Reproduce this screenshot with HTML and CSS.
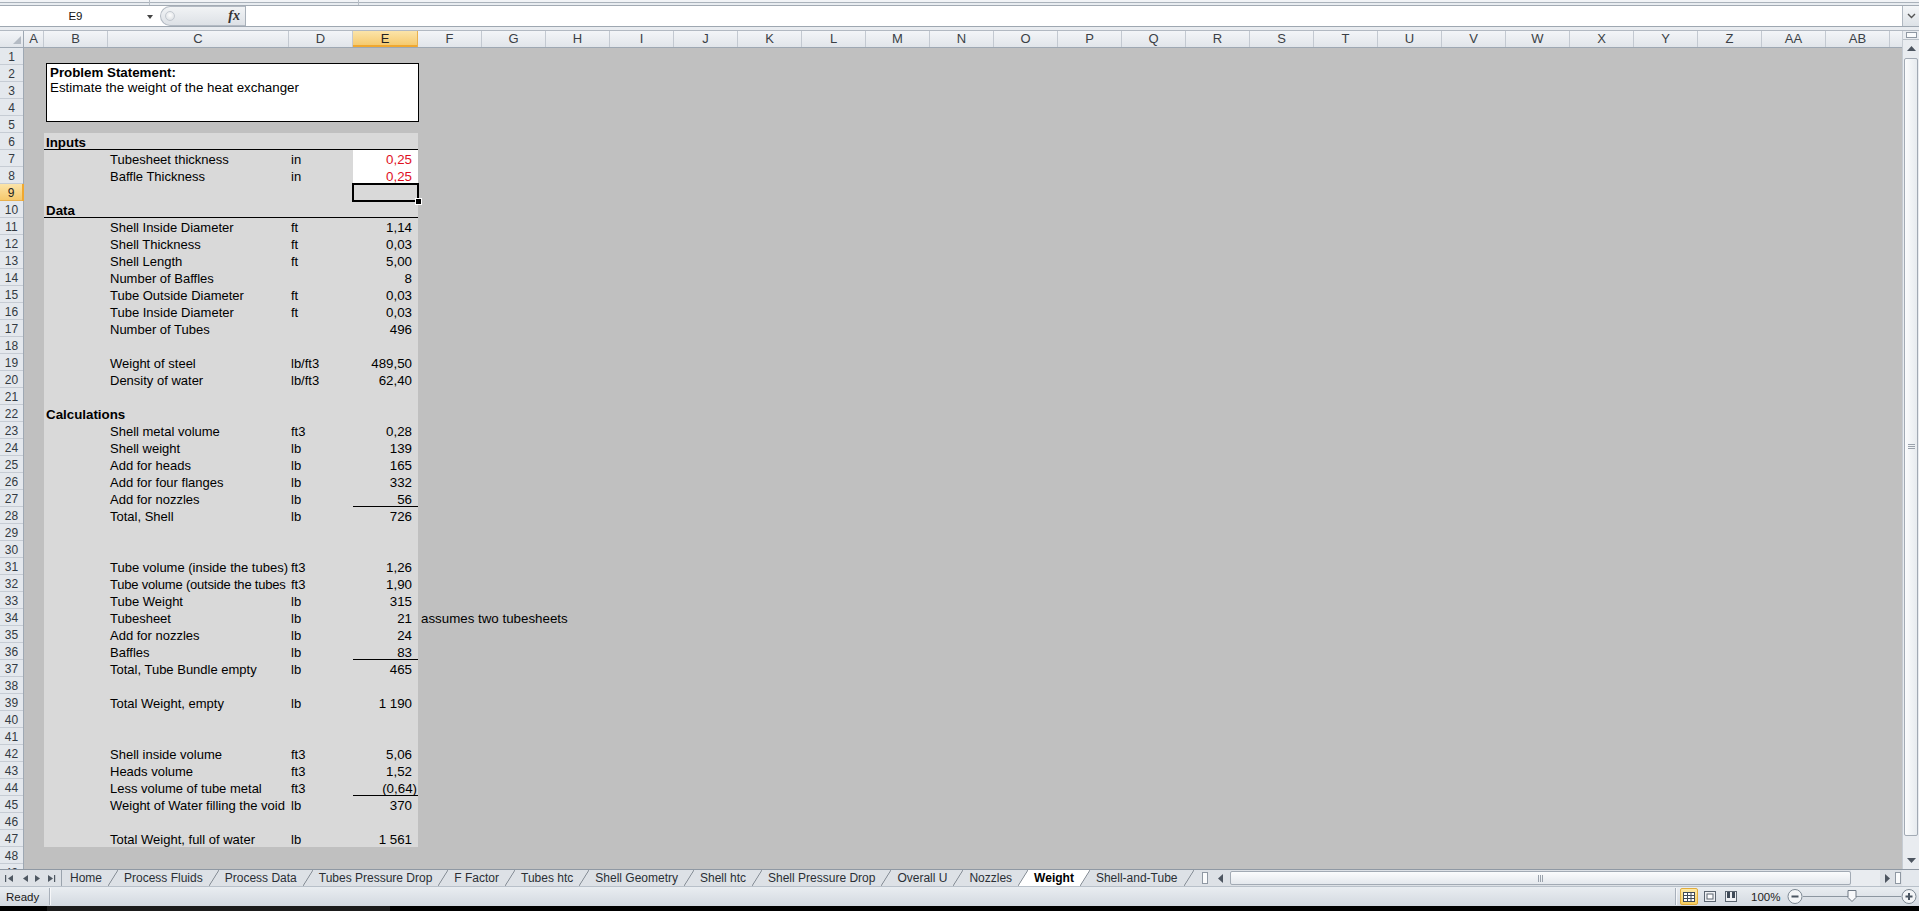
FILE: index.html
```html
<!DOCTYPE html>
<html>
<head>
<meta charset="utf-8">
<link rel="stylesheet" href="styles.css">
</head>
<body>
<div class="app">
  <div class="topstrip"><i class="tsd d1"></i><i class="tsd d2"></i></div>
  <div class="fbar">
    <div class="namebox"><span class="nbtext">E9</span><i class="nbarrow"></i></div>
    <div class="fxbox"><i class="knob"></i><span class="fx">fx</span></div>
    <div class="finput"></div>
    <div class="fexp"><svg width="9" height="6" viewBox="0 0 9 6"><path d="M1 1 L4.5 4.5 L8 1" fill="none" stroke="#555" stroke-width="1.4"/></svg></div>
  </div>
  <div class="fgap"></div>
  <div class="main">
    <div class="sheetwrap">
      <div class="colhdr">
        <div class="hc corner"><svg width="24" height="16" viewBox="0 0 24 16"><polygon points="21,5 21,13 13,13" fill="#b4bbc4"/></svg></div>
        <div class="hc wa">A</div><div class="hc wb">B</div><div class="hc wc">C</div><div class="hc wd">D</div><div class="hc we hsel">E</div>
        <div class="hc">F</div><div class="hc">G</div><div class="hc">H</div><div class="hc">I</div><div class="hc">J</div><div class="hc">K</div><div class="hc">L</div><div class="hc">M</div><div class="hc">N</div><div class="hc">O</div><div class="hc">P</div><div class="hc">Q</div><div class="hc">R</div><div class="hc">S</div><div class="hc">T</div><div class="hc">U</div><div class="hc">V</div><div class="hc">W</div><div class="hc">X</div><div class="hc">Y</div><div class="hc">Z</div><div class="hc">AA</div><div class="hc">AB</div><div class="hc hrest"></div>
      </div>
      <div class="rows">
        <div class="row"><div class="rh">1</div></div>
        <div class="row"><div class="rh">2</div></div>
        <div class="row"><div class="rh">3</div></div>
        <div class="row"><div class="rh">4</div></div>
        <div class="row"><div class="rh">5</div></div>
        <div class="row"><div class="rh">6</div><div class="ca"></div><div class="band bd ul"><div class="cb hd">Inputs</div></div></div>
        <div class="row"><div class="rh">7</div><div class="ca"></div><div class="band bd"><div class="cb"></div><div class="cc">Tubesheet thickness</div><div class="cd">in</div><div class="ce inp">0,25</div></div></div>
        <div class="row"><div class="rh">8</div><div class="ca"></div><div class="band bd"><div class="cb"></div><div class="cc">Baffle Thickness</div><div class="cd">in</div><div class="ce inp">0,25</div></div></div>
        <div class="row"><div class="rh rsel">9</div><div class="ca"></div><div class="band bd"><div class="cb"></div><div class="cc"></div><div class="cd"></div><div class="ce sel"></div></div></div>
        <div class="row"><div class="rh">10</div><div class="ca"></div><div class="band bd ul"><div class="cb hd">Data</div></div></div>
        <div class="row"><div class="rh">11</div><div class="ca"></div><div class="band bd"><div class="cb"></div><div class="cc">Shell Inside Diameter</div><div class="cd">ft</div><div class="ce">1,14</div></div></div>
        <div class="row"><div class="rh">12</div><div class="ca"></div><div class="band bd"><div class="cb"></div><div class="cc">Shell Thickness</div><div class="cd">ft</div><div class="ce">0,03</div></div></div>
        <div class="row"><div class="rh">13</div><div class="ca"></div><div class="band bd"><div class="cb"></div><div class="cc">Shell Length</div><div class="cd">ft</div><div class="ce">5,00</div></div></div>
        <div class="row"><div class="rh">14</div><div class="ca"></div><div class="band bd"><div class="cb"></div><div class="cc">Number of Baffles</div><div class="cd"></div><div class="ce">8</div></div></div>
        <div class="row"><div class="rh">15</div><div class="ca"></div><div class="band bd"><div class="cb"></div><div class="cc">Tube Outside Diameter</div><div class="cd">ft</div><div class="ce">0,03</div></div></div>
        <div class="row"><div class="rh">16</div><div class="ca"></div><div class="band bd"><div class="cb"></div><div class="cc">Tube Inside Diameter</div><div class="cd">ft</div><div class="ce">0,03</div></div></div>
        <div class="row"><div class="rh">17</div><div class="ca"></div><div class="band bd"><div class="cb"></div><div class="cc">Number of Tubes</div><div class="cd"></div><div class="ce">496</div></div></div>
        <div class="row"><div class="rh">18</div><div class="ca"></div><div class="band bd"></div></div>
        <div class="row"><div class="rh">19</div><div class="ca"></div><div class="band bd"><div class="cb"></div><div class="cc">Weight of steel</div><div class="cd">lb/ft3</div><div class="ce">489,50</div></div></div>
        <div class="row"><div class="rh">20</div><div class="ca"></div><div class="band bd"><div class="cb"></div><div class="cc">Density of water</div><div class="cd">lb/ft3</div><div class="ce">62,40</div></div></div>
        <div class="row"><div class="rh">21</div><div class="ca"></div><div class="band bd"></div></div>
        <div class="row"><div class="rh">22</div><div class="ca"></div><div class="band bd"><div class="cb hd">Calculations</div></div></div>
        <div class="row"><div class="rh">23</div><div class="ca"></div><div class="band bd"><div class="cb"></div><div class="cc">Shell metal volume</div><div class="cd">ft3</div><div class="ce">0,28</div></div></div>
        <div class="row"><div class="rh">24</div><div class="ca"></div><div class="band bd"><div class="cb"></div><div class="cc">Shell weight</div><div class="cd">lb</div><div class="ce">139</div></div></div>
        <div class="row"><div class="rh">25</div><div class="ca"></div><div class="band bd"><div class="cb"></div><div class="cc">Add for heads</div><div class="cd">lb</div><div class="ce">165</div></div></div>
        <div class="row"><div class="rh">26</div><div class="ca"></div><div class="band bd"><div class="cb"></div><div class="cc">Add for four flanges</div><div class="cd">lb</div><div class="ce">332</div></div></div>
        <div class="row"><div class="rh">27</div><div class="ca"></div><div class="band bd"><div class="cb"></div><div class="cc">Add for nozzles</div><div class="cd">lb</div><div class="ce ul">56</div></div></div>
        <div class="row"><div class="rh">28</div><div class="ca"></div><div class="band bd"><div class="cb"></div><div class="cc">Total, Shell</div><div class="cd">lb</div><div class="ce">726</div></div></div>
        <div class="row"><div class="rh">29</div><div class="ca"></div><div class="band bd"></div></div>
        <div class="row"><div class="rh">30</div><div class="ca"></div><div class="band bd"></div></div>
        <div class="row"><div class="rh">31</div><div class="ca"></div><div class="band bd"><div class="cb"></div><div class="cc">Tube volume (inside the tubes)</div><div class="cd">ft3</div><div class="ce">1,26</div></div></div>
        <div class="row"><div class="rh">32</div><div class="ca"></div><div class="band bd"><div class="cb"></div><div class="cc tight">Tube volume (outside the tubes</div><div class="cd">ft3</div><div class="ce">1,90</div></div></div>
        <div class="row"><div class="rh">33</div><div class="ca"></div><div class="band bd"><div class="cb"></div><div class="cc">Tube Weight</div><div class="cd">lb</div><div class="ce">315</div></div></div>
        <div class="row"><div class="rh">34</div><div class="ca"></div><div class="band bd"><div class="cb"></div><div class="cc">Tubesheet</div><div class="cd">lb</div><div class="ce">21</div></div><div class="cf">assumes two tubesheets</div></div>
        <div class="row"><div class="rh">35</div><div class="ca"></div><div class="band bd"><div class="cb"></div><div class="cc">Add for nozzles</div><div class="cd">lb</div><div class="ce">24</div></div></div>
        <div class="row"><div class="rh">36</div><div class="ca"></div><div class="band bd"><div class="cb"></div><div class="cc">Baffles</div><div class="cd">lb</div><div class="ce ul">83</div></div></div>
        <div class="row"><div class="rh">37</div><div class="ca"></div><div class="band bd"><div class="cb"></div><div class="cc">Total, Tube Bundle empty</div><div class="cd">lb</div><div class="ce">465</div></div></div>
        <div class="row"><div class="rh">38</div><div class="ca"></div><div class="band bd"></div></div>
        <div class="row"><div class="rh">39</div><div class="ca"></div><div class="band bd"><div class="cb"></div><div class="cc">Total Weight, empty</div><div class="cd">lb</div><div class="ce">1 190</div></div></div>
        <div class="row"><div class="rh">40</div><div class="ca"></div><div class="band bd"></div></div>
        <div class="row"><div class="rh">41</div><div class="ca"></div><div class="band bd"></div></div>
        <div class="row"><div class="rh">42</div><div class="ca"></div><div class="band bd"><div class="cb"></div><div class="cc">Shell inside volume</div><div class="cd">ft3</div><div class="ce">5,06</div></div></div>
        <div class="row"><div class="rh">43</div><div class="ca"></div><div class="band bd"><div class="cb"></div><div class="cc">Heads volume</div><div class="cd">ft3</div><div class="ce">1,52</div></div></div>
        <div class="row"><div class="rh">44</div><div class="ca"></div><div class="band bd"><div class="cb"></div><div class="cc">Less volume of tube metal</div><div class="cd">ft3</div><div class="ce ul neg">(0,64)</div></div></div>
        <div class="row"><div class="rh">45</div><div class="ca"></div><div class="band bd"><div class="cb"></div><div class="cc">Weight of Water filling the void</div><div class="cd">lb</div><div class="ce">370</div></div></div>
        <div class="row"><div class="rh">46</div><div class="ca"></div><div class="band bd"></div></div>
        <div class="row"><div class="rh">47</div><div class="ca"></div><div class="band bd"><div class="cb"></div><div class="cc">Total Weight, full of water</div><div class="cd">lb</div><div class="ce">1 561</div></div></div>
        <div class="row"><div class="rh">48</div></div>
        <div class="row"><div class="rh">49</div></div>
        <div class="textbox"><b>Problem Statement:</b><br>Estimate the weight of the heat exchanger</div>
      </div>
    </div>
    <div class="vscroll">
      <div class="vsplit"><i></i></div>
      <div class="varrow"><svg width="9" height="5" viewBox="0 0 9 5"><polygon points="0,5 9,5 4.5,0" fill="#4d5560"/></svg></div>
      <div class="vtrack"><div class="vthumb"><svg width="7" height="6" viewBox="0 0 7 6"><path d="M0 0.5H7M0 2.5H7M0 4.5H7" stroke="#9aa2ac" stroke-width="1"/></svg></div></div>
      <div class="varrow"><svg width="9" height="5" viewBox="0 0 9 5"><polygon points="0,0 9,0 4.5,5" fill="#4d5560"/></svg></div>
    </div>
  </div>
  <div class="tabbar">
    <div class="tnav"><svg width="60" height="16" viewBox="0 0 60 16"><g fill="#4f5862"><rect x="5" y="5" width="1.2" height="7"/><polygon points="13,5 13,12 8,8.5"/><polygon points="28,5 28,12 23,8.5"/><polygon points="35,5 35,12 40,8.5"/><polygon points="48,5 48,12 53,8.5"/><rect x="54" y="5" width="1.2" height="7"/></g></svg></div>
    <div class="tabs">
      <span class="tab first">Home</span><i class="sl"></i>
      <span class="tab">Process Fluids</span><i class="sl"></i>
      <span class="tab">Process Data</span><i class="sl"></i>
      <span class="tab">Tubes Pressure Drop</span><i class="sl"></i>
      <span class="tab">F Factor</span><i class="sl"></i>
      <span class="tab">Tubes htc</span><i class="sl"></i>
      <span class="tab">Shell Geometry</span><i class="sl"></i>
      <span class="tab">Shell htc</span><i class="sl"></i>
      <span class="tab">Shell Pressure Drop</span><i class="sl"></i>
      <span class="tab">Overall U</span><i class="sl"></i>
      <span class="tab">Nozzles</span><i class="sl sa"></i>
      <span class="tab on">Weight</span><i class="sl sb"></i>
      <span class="tab">Shell-and-Tube</span><i class="sl"></i>
    </div>
    <div class="hsplit"><i></i></div>
    <div class="harrow l"><svg width="5" height="9" viewBox="0 0 5 9"><polygon points="5,0 5,9 0,4.5" fill="#4d5560"/></svg></div>
    <div class="hthumb"><svg width="6" height="7" viewBox="0 0 6 7"><path d="M0.5 0V7M2.5 0V7M4.5 0V7" stroke="#9aa2ac" stroke-width="1"/></svg></div>
    <div class="htrack"></div>
    <div class="harrow r"><svg width="5" height="9" viewBox="0 0 5 9"><polygon points="0,0 0,9 5,4.5" fill="#4d5560"/></svg></div>
    <div class="hsplit2"><i></i></div>
    <div class="hcorner"></div>
  </div>
  <div class="status">
    <span class="ready">Ready</span><i class="ssep"></i>
    <div class="sfill"></div>
    <i class="ssep"></i>
    <div class="views">
      <span class="vbtn on"><svg width="12" height="10" viewBox="0 0 12 10"><rect x="0.5" y="0.5" width="11" height="9" fill="#fff" stroke="#3f4a57"/><path d="M0.5 3.5H11.5M0.5 6.5H11.5M4.5 0.5V9.5M8 0.5V9.5" stroke="#3f4a57"/></svg></span>
      <span class="vbtn"><svg width="12" height="11" viewBox="0 0 12 11"><rect x="0.5" y="0.5" width="11" height="10" fill="#eef0f3" stroke="#5b6570"/><rect x="3" y="3" width="6" height="5" fill="#fff" stroke="#5b6570"/></svg></span>
      <span class="vbtn"><svg width="12" height="11" viewBox="0 0 12 11"><rect x="0.5" y="0.5" width="11" height="10" fill="#eef0f3" stroke="#5b6570"/><rect x="2" y="1" width="3" height="6" fill="#3f4a57"/><rect x="7" y="1" width="3" height="6" fill="#3f4a57"/></svg></span>
    </div>
    <span class="zoompct">100%</span>
    <svg class="zslider" width="132" height="19" viewBox="0 0 132 19">
      <circle cx="8" cy="9.5" r="7" fill="#f3f5f7" stroke="#7c8792"/>
      <rect x="4.5" y="8.5" width="7" height="2" fill="#4a5561"/>
      <line x1="16" y1="9.5" x2="114" y2="9.5" stroke="#8c96a0" stroke-width="1"/>
      <polygon points="61,3.5 69,3.5 69,10.5 65,14.5 61,10.5" fill="#f7f8fa" stroke="#6e7884"/>
      <circle cx="122" cy="9.5" r="7" fill="#f3f5f7" stroke="#7c8792"/>
      <rect x="118.5" y="8.5" width="7" height="2" fill="#4a5561"/>
      <rect x="121" y="6" width="2" height="7" fill="#4a5561"/>
    </svg>
  </div>
  <div class="taskbar"><i class="tk1"></i><i class="tk2"></i></div>
</div>
</body>
</html>
```

FILE: styles.css
```css
* { box-sizing: border-box; margin: 0; padding: 0; }
html, body { width: 1919px; height: 911px; overflow: hidden; }
body { font-family: "Liberation Sans", Arial, sans-serif; background: #c0c0c0; color: #000; }
i { display: block; font-style: normal; }

.app { width: 1919px; height: 911px; display: flex; flex-direction: column; overflow: hidden; }

/* top strip (ribbon bottom) */
.topstrip { height: 6px; background: linear-gradient(#f1f3f6 0, #f1f3f6 2px, #aab2bb 2px, #aab2bb 3px, #e8ecf0 3px); border-bottom: 1px solid #a3abb4; display: flex; }
.tsd { width: 1px; height: 5px; background: #b7bec6; }
.tsd.d1 { margin-left: 149px; }
.tsd.d2 { margin-left: 208px; }

/* formula bar */
.fbar { height: 21px; display: flex; background: #fff; border-bottom: 1px solid #9ea7b1; }
.namebox { width: 158px; display: flex; align-items: center; background: #fff; }
.nbtext { flex: 1; text-align: center; font-size: 11.5px; color: #111; padding-left: 4px; }
.nbarrow { width: 0; height: 0; border-left: 3.5px solid transparent; border-right: 3.5px solid transparent; border-top: 4px solid #444; margin-right: 5px; margin-top: 1px; }
.fxbox { width: 85px; margin-left: 2px; display: flex; align-items: center; background: linear-gradient(#f1f3f5, #dde1e6); border: 1px solid #b3bac3; border-right: none; border-radius: 10px 0 0 10px; }
.knob { width: 10px; height: 10px; border-radius: 50%; border: 1px solid #c3c9d0; background: radial-gradient(circle at 50% 40%, #fdfdfd, #d7dbe0); margin-left: 4px; }
.fx { margin-left: auto; margin-right: 5px; font-family: "Liberation Serif", serif; font-style: italic; font-weight: bold; font-size: 14px; color: #333; }
.finput { flex: 1; background: #fff; border-left: 1px solid #a8b0b9; }
.fexp { width: 17px; display: flex; align-items: center; justify-content: center; background: linear-gradient(#f4f6f8, #dde2e7); border-left: 1px solid #b0b8c1; }
.fgap { height: 4px; background: #e9ecf0; border-bottom: 1px solid #b2b9c2; }

/* main sheet area */
.main { height: 838px; display: flex; }
.sheetwrap { flex: 1; display: flex; flex-direction: column; overflow: hidden; }

.colhdr { height: 17px; display: flex; background: linear-gradient(#f3f5f8, #e1e5ea); border-bottom: 1px solid #9ea8b3; }
.hc { width: 64px; flex: none; border-right: 1px solid #c3c9d1; text-align: center; font-size: 13px; line-height: 16px; color: #3a3f45; }
.hc.corner { width: 24px; border-right: 1px solid #9ea8b3; }
.hc.corner svg { display: block; }
.hc.wa { width: 20px; }
.hc.wb { width: 64px; }
.hc.wc { width: 181px; }
.hc.wd { width: 64px; }
.hc.we { width: 65px; }
.hc.hsel { background: linear-gradient(#fbe4a9, #f5c768); border-right-color: #e8b04e; box-shadow: inset 0 -2px 0 #f0a830; color: #222; }
.hc.hrest { flex: 1; border-right: none; }

.rows { height: 821px; position: relative; overflow: hidden; }
.row { height: 17px; display: flex; }
.rh { width: 24px; flex: none; background: #e4e8ed; border-right: 1px solid #9ea8b3; box-shadow: inset 0 -1px 0 #c6ccd4; text-align: center; font-size: 12px; line-height: 18px; color: #333a42; }
.rh.rsel { background: linear-gradient(#fbe4a9, #f5c768); box-shadow: inset 0 -1px 0 #e8b04e; border-right: 2px solid #f0a830; color: #222; }
.ca { width: 20px; flex: none; }
.band { width: 374px; flex: none; display: flex; font-size: 13px; line-height: 20px; white-space: nowrap; }
.band.bd { background: #d9d9d9; }
.band.ul { box-shadow: inset 0 -1px 0 #000; }
.cb { width: 64px; flex: none; padding-left: 2px; overflow: visible; font-size: 13.333px; }
.cb.hd { font-weight: bold; }
.cc { width: 181px; flex: none; padding-left: 2px; overflow: hidden; }
.cc.tight { letter-spacing: -0.2px; }
.cd { width: 64px; flex: none; padding-left: 2px; overflow: hidden; }
.ce { width: 65px; flex: none; text-align: right; padding-right: 6px; overflow: hidden; font-size: 13.333px; }
.ce.neg { padding-right: 1px; }
.ce.inp { background: #fff; color: #e0101e; }
.ce.ul { box-shadow: inset 0 -1px 0 #000; }
.ce.sel { position: relative; z-index: 2; overflow: visible; outline: 2px solid #000; outline-offset: -1px; }
.ce.sel::after { content: ""; position: absolute; right: -4px; bottom: -4px; width: 5px; height: 5px; background: #000; border: 1px solid #fff; }
.cf { flex: 1; padding-left: 3px; font-size: 13.333px; line-height: 20px; white-space: nowrap; }

.textbox { position: absolute; left: 46px; top: 15px; width: 373px; height: 59px; background: #fff; border: 1px solid #000; padding: 1px 3px; font-size: 13.333px; line-height: 15px; }

/* vertical scrollbar */
.vscroll { width: 17px; flex: none; display: flex; flex-direction: column; background: #e9ecf0; border-left: 1px solid #c6ccd3; }
.vsplit { height: 9px; display: flex; align-items: center; justify-content: center; border-bottom: 1px solid #b8bfc7; }
.vsplit i { width: 11px; height: 6px; border: 1px solid #8f98a3; background: #fafbfc; }
.varrow { height: 17px; display: flex; align-items: center; justify-content: center; }
.vtrack { flex: 1; display: flex; flex-direction: column; padding: 1px 1px 0; }
.vthumb { height: 778px; border: 1px solid #a2aab4; border-radius: 2px; background: linear-gradient(90deg, #fbfcfd, #e7ebef); display: flex; align-items: center; justify-content: center; }
.vthumb svg { display: block; }

/* sheet tabs */
.tabbar { height: 17px; display: flex; background: #dde1e6; border-top: 1px solid #8f98a3; font-size: 12px; }
.tnav { width: 62px; flex: none; border-right: 1px solid #9aa3ad; }
.tnav svg { display: block; }
.tabs { width: 1138px; flex: none; display: flex; overflow: hidden; white-space: nowrap; }
.tab { padding: 0 6px; line-height: 16px; color: #2a2f35; flex: none; }
.tab.first { padding-left: 8px; }
.tab.on { background: #fff; font-weight: bold; color: #000; }
.sl { width: 10px; height: 16px; flex: none; background: linear-gradient(to bottom right, transparent calc(50% - 0.8px), #7f8790 50%, transparent calc(50% + 0.8px)); }
.sl.sa { background: linear-gradient(to bottom right, transparent calc(50% - 0.8px), #7f8790 50%, #fff calc(50% + 0.8px)); }
.sl.sb { background: linear-gradient(to bottom right, #fff calc(50% - 0.8px), #7f8790 50%, transparent calc(50% + 0.8px)); }
.hsplit { width: 10px; flex: none; display: flex; align-items: center; justify-content: center; }
.hsplit i, .hsplit2 i { width: 6px; height: 12px; border: 1px solid #8f98a3; background: #fafbfc; }
.harrow { width: 20px; flex: none; display: flex; align-items: center; justify-content: center; }
.harrow.r { width: 14px; }
.hthumb { width: 621px; flex: none; margin: 1px 0; border: 1px solid #a2aab4; border-radius: 2px; background: linear-gradient(#fbfcfd, #e4e8ed); display: flex; align-items: center; justify-content: center; }
.hthumb svg { display: block; }
.htrack { flex: 1; background: #e9ecf0; }
.hsplit2 { width: 8px; flex: none; display: flex; align-items: center; justify-content: center; }
.hcorner { width: 17px; flex: none; background: #e4e8ed; }

/* status bar */
.status { height: 20px; display: flex; align-items: center; background: linear-gradient(#e9edf1, #d3d9e0); border-top: 1px solid #b8c0c9; }
.ready { font-size: 11.5px; line-height: 16px; color: #1a1a1a; padding: 0 10px 0 6px; white-space: nowrap; flex: none; }
.ssep { width: 1px; height: 17px; background: #a8b0ba; box-shadow: 1px 0 0 #f6f7f9; }
.sfill { flex: 1; }
.views { display: flex; align-items: center; margin-left: 4px; gap: 3px; }
.vbtn { width: 18px; height: 17px; display: flex; align-items: center; justify-content: center; }
.vbtn.on { background: linear-gradient(#fde9a6, #f8cf5f); border: 1px solid #e2ac3c; border-radius: 2px; }
.vbtn svg { display: block; }
.zoompct { font-size: 11.5px; line-height: 16px; color: #222; margin-left: 11px; width: 36px; white-space: nowrap; }
.zslider { display: block; flex: none; }

.taskbar { height: 5px; background: #000; display: flex; }
.tk1 { width: 47px; }
.tk2 { width: 343px; background: #1b1b1b; }
```
